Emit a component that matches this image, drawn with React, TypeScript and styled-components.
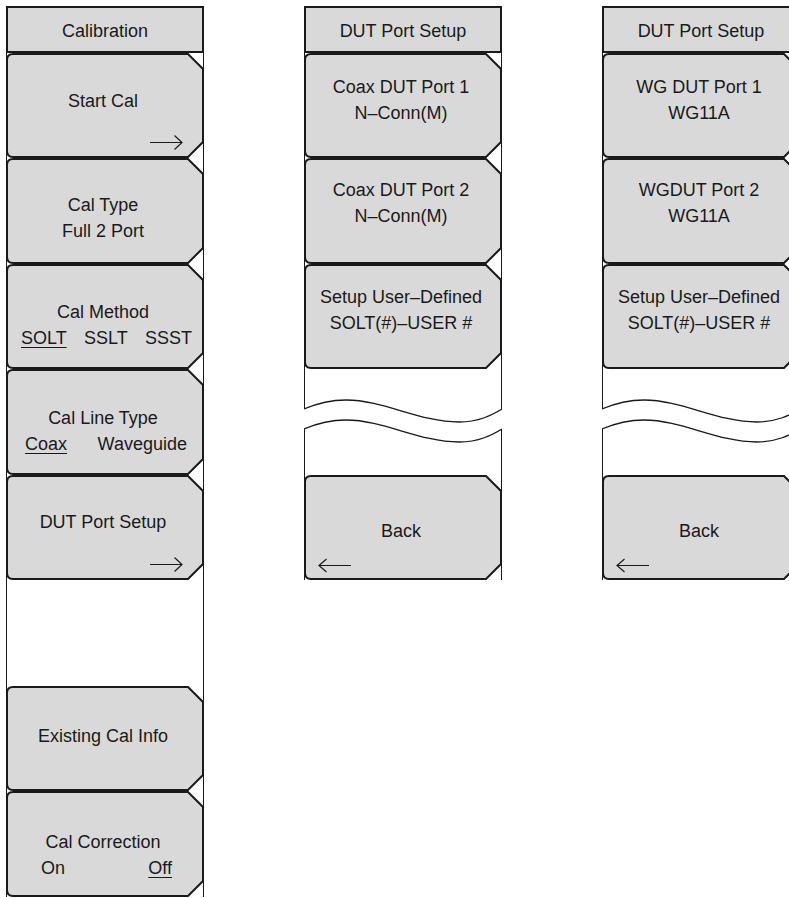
import React from "react";
import styled, { createGlobalStyle } from "styled-components";

const INK = "#1a1a1a";
const FACE = "#d9d9d9";
const COL_W = 198;

type Line = string | { options: { text: string; on?: boolean }[]; pl: number; pr: number };

interface KeyDef {
  h: number;
  dy: number;
  lines: Line[];
  arrow?: "left" | "right";
}

interface SlotDef {
  slot: number;
  broken?: boolean;
}

type Item = KeyDef | SlotDef;

const leftMenu: Item[] = [
  { h: 105, dy: -5, lines: ["Start Cal"], arrow: "right" },
  { h: 106, dy: 7, lines: ["Cal Type", "Full 2 Port"] },
  {
    h: 105,
    dy: 8,
    lines: [
      "Cal Method",
      {
        options: [{ text: "SOLT", on: true }, { text: "SSLT" }, { text: "SSST" }],
        pl: 15,
        pr: 8,
      },
    ],
  },
  {
    h: 106,
    dy: 9,
    lines: [
      "Cal Line Type",
      { options: [{ text: "Coax", on: true }, { text: "Waveguide" }], pl: 19, pr: 13 },
    ],
  },
  { h: 105, dy: -6, lines: ["DUT Port Setup"], arrow: "right" },
  { slot: 106 },
  { h: 105, dy: -3, lines: ["Existing Cal Info"] },
  {
    h: 106,
    dy: 11,
    lines: [
      "Cal Correction",
      { options: [{ text: "On" }, { text: "Off", on: true }], pl: 35, pr: 28 },
    ],
  },
];

const coaxMenu: Item[] = [
  { h: 105, dy: -6, lines: ["Coax DUT Port 1", "N–Conn(M)"] },
  { h: 106, dy: -8, lines: ["Coax DUT Port 2", "N–Conn(M)"] },
  { h: 105, dy: -7, lines: ["Setup User–Defined", "SOLT(#)–USER #"] },
  { slot: 106, broken: true },
  { h: 105, dy: 3, lines: ["Back"], arrow: "left" },
];

const waveguideMenu: Item[] = [
  { h: 105, dy: -6, lines: ["WG DUT Port 1", "WG11A"] },
  { h: 106, dy: -8, lines: ["WGDUT Port 2", "WG11A"] },
  { h: 105, dy: -7, lines: ["Setup User–Defined", "SOLT(#)–USER #"] },
  { slot: 106, broken: true },
  { h: 105, dy: 3, lines: ["Back"], arrow: "left" },
];

const keyPath = (h: number) =>
  `M7 1 H182 L197 16 V${h - 16} L182 ${h - 1} H7 Q1 ${h - 1} 1 ${h - 7} V7 Q1 1 7 1 Z`;

const KeyShape = ({ h }: { h: number }) => (
  <Outline width={COL_W} height={h} viewBox={`0 0 ${COL_W} ${h}`}>
    <path d={`M0.5 0 V${h} M197.5 0 V${h}`} stroke={INK} strokeWidth={1} fill="none" />
    <path d={keyPath(h)} fill={FACE} stroke={INK} strokeWidth={2} />
  </Outline>
);

const RightArrow = () => (
  <ArrowRight width={33} height={15} viewBox="0 0 33 15">
    <path d="M0 7.5 H32 M24.5 0.5 L32 7.5 L24.5 14.5" fill="none" stroke={INK} strokeWidth={1.2} />
  </ArrowRight>
);

const LeftArrow = () => (
  <ArrowLeft width={33} height={15} viewBox="0 0 33 15">
    <path d="M1 7.5 H33 M8.5 1 L1 7.5 L8.5 14" fill="none" stroke={INK} strokeWidth={1.2} />
  </ArrowLeft>
);

const WAVE = "M0 11 C14 5, 26 2, 42 2 C80 2, 115 24, 155 24 C175 24, 188 17, 198 11";
const WAVE_LOW = "M0 31 C14 25, 26 22, 42 22 C80 22, 115 44, 155 44 C175 44, 188 37, 198 31";

const BreakMark = () => (
  <Wave width={COL_W} height={46} viewBox={`0 0 ${COL_W} 46`}>
    <g fill="none" stroke={INK}>
      <path d="M0.5 0 V11 M197.5 0 V11 M0.5 31 V46 M197.5 31 V46" strokeWidth={1} />
      <path d={WAVE} strokeWidth={1.3} />
      <path d={WAVE_LOW} strokeWidth={1.3} />
    </g>
  </Wave>
);

const Key = ({ def }: { def: KeyDef }) => (
  <KeyBox $h={def.h}>
    <KeyShape h={def.h} />
    <KeyLabel $dy={def.dy}>
      {def.lines.map((line, i) =>
        typeof line === "string" ? (
          <LabelLine key={i}>{line}</LabelLine>
        ) : (
          <Options key={i} $pl={line.pl} $pr={line.pr}>
            {line.options.map((o) => (
              <Option key={o.text} $on={!!o.on}>
                {o.text}
              </Option>
            ))}
          </Options>
        )
      )}
    </KeyLabel>
    {def.arrow === "right" && <RightArrow />}
    {def.arrow === "left" && <LeftArrow />}
  </KeyBox>
);

const Menu = ({ title, items }: { title: string; items: Item[] }) => (
  <Column>
    <Header>{title}</Header>
    {items.map((item, i) => {
      if ("slot" in item) {
        return item.broken ? (
          <Slot key={i}>
            <Edge $h={29} />
            <BreakMark />
            <Edge $h={item.slot - 29 - 46} />
          </Slot>
        ) : (
          <Edge key={i} $h={item.slot} />
        );
      }
      return <Key key={i} def={item} />;
    })}
  </Column>
);

export default function App() {
  return (
    <>
      <GlobalStyle />
      <Page>
        <Menu title="Calibration" items={leftMenu} />
        <Menu title="DUT Port Setup" items={coaxMenu} />
        <Menu title="DUT Port Setup" items={waveguideMenu} />
      </Page>
    </>
  );
}

const GlobalStyle = createGlobalStyle`
  html, body {
    margin: 0;
    padding: 0;
    background: #fff;
    overflow: hidden;
  }
  body {
    font-family: "Liberation Sans", Arial, sans-serif;
    color: ${INK};
  }
`;

const Page = styled.div`
  display: flex;
  align-items: flex-start;
  gap: 100px;
  width: 789px;
  height: 898px;
  padding: 6px 0 0 6px;
  box-sizing: border-box;
  overflow: hidden;
`;

const Column = styled.div`
  display: flex;
  flex-direction: column;
  width: ${COL_W}px;
  flex-shrink: 0;
`;

const Header = styled.div`
  height: 47px;
  box-sizing: border-box;
  border: 2px solid ${INK};
  background: ${FACE};
  display: flex;
  align-items: center;
  justify-content: center;
  padding-top: 3px;
  font-size: 18px;
  white-space: nowrap;
`;

const KeyBox = styled.div<{ $h: number }>`
  position: relative;
  height: ${(p) => p.$h}px;
  width: ${COL_W}px;
`;

const Outline = styled.svg`
  position: absolute;
  left: 0;
  top: 0;
  display: block;
`;

const KeyLabel = styled.div<{ $dy: number }>`
  position: relative;
  height: 100%;
  box-sizing: border-box;
  display: flex;
  flex-direction: column;
  align-items: center;
  justify-content: center;
  padding: ${(p) => Math.max(0, p.$dy * 2)}px 4px ${(p) => Math.max(0, -p.$dy * 2)}px 0;
  font-size: 18px;
`;

const LabelLine = styled.div`
  line-height: 26px;
  white-space: nowrap;
`;

const Options = styled.div<{ $pl: number; $pr: number }>`
  align-self: stretch;
  display: flex;
  justify-content: space-between;
  line-height: 26px;
  padding: 0 ${(p) => p.$pr}px 0 ${(p) => p.$pl}px;
`;

const Option = styled.span<{ $on: boolean }>`
  text-decoration: ${(p) => (p.$on ? "underline" : "none")};
  text-underline-offset: 3px;
  text-decoration-thickness: 1px;
`;

const ArrowRight = styled.svg`
  position: absolute;
  right: 21px;
  bottom: 8px;
`;

const ArrowLeft = styled.svg`
  position: absolute;
  left: 14px;
  bottom: 7px;
`;

const Slot = styled.div`
  display: flex;
  flex-direction: column;
`;

const Edge = styled.div<{ $h: number }>`
  height: ${(p) => p.$h}px;
  box-sizing: border-box;
  border-left: 1px solid ${INK};
  border-right: 1px solid ${INK};
`;

const Wave = styled.svg`
  display: block;
`;
